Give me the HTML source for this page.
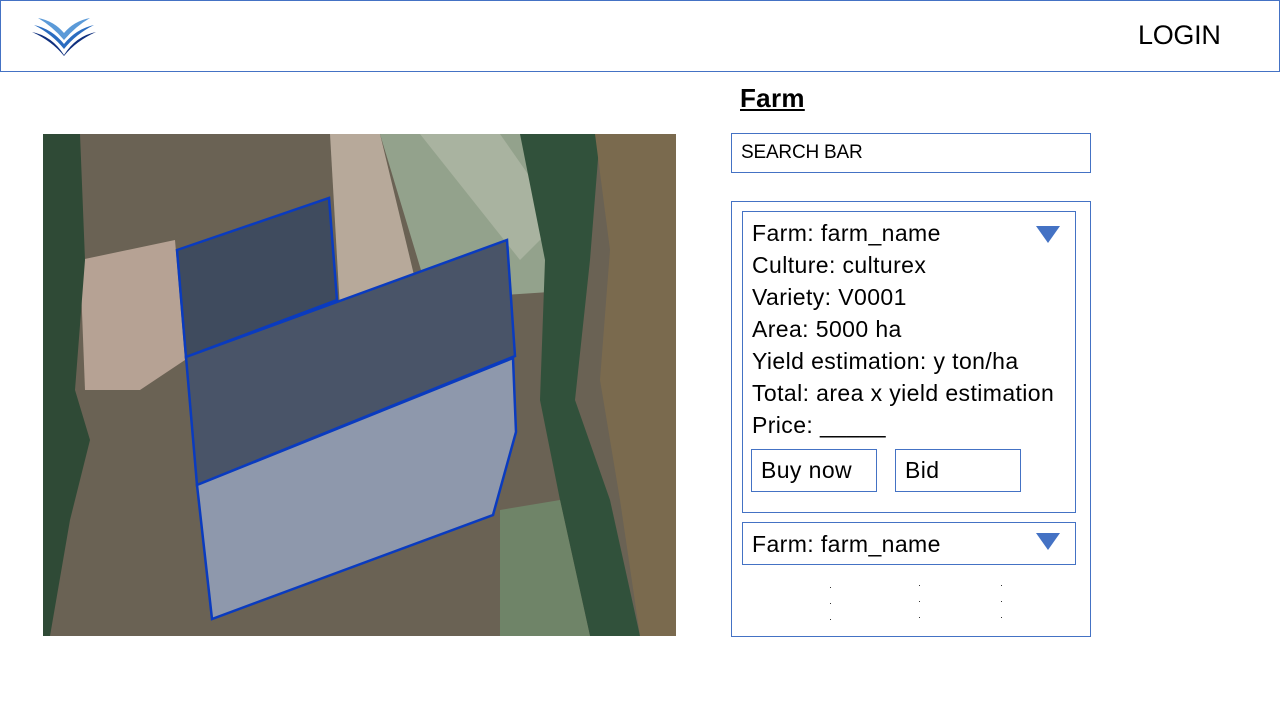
<!DOCTYPE html>
<html><head><style>
body{margin:0;width:1280px;height:720px;position:relative;background:#fff;font-family:"Liberation Sans",sans-serif;overflow:hidden}
.a{position:absolute}
.t{position:absolute;left:752px;font-size:23px;letter-spacing:0.4px;color:#000;white-space:nowrap;line-height:26px}
.box{position:absolute;border:1px solid #4472c4;box-sizing:border-box}
.tri{position:absolute;width:0;height:0;border-left:12px solid transparent;border-right:12px solid transparent;border-top:17px solid #4472c4}
.dot{position:absolute;width:1px;height:1px;background:#333}
</style></head><body>
<div class="box" style="left:0;top:0;width:1280px;height:72px"></div>
<svg class="a" style="left:30px;top:15px" width="68" height="42" viewBox="0 0 68 42">
<path d="M8 3 Q24 6 34 18 Q44 6 60 3 Q46 11 34 25 Q22 11 8 3Z" fill="#5b9ad8"/>
<path d="M4 10 Q22 14 34 29 Q46 14 64 10 Q46 19 34 34 Q22 19 4 10Z" fill="#2a6cc0"/>
<path d="M2 17 Q22 21 34 40 Q46 21 66 17 Q46 26 34 41 Q22 26 2 17Z" fill="#10307e"/>
</svg>
<div class="a" style="left:1138px;top:20px;font-size:27px;letter-spacing:-0.3px">LOGIN</div>
<div class="a" style="left:740px;top:83px;font-size:26px;font-weight:bold;text-decoration:underline;letter-spacing:0.3px">Farm</div>
<div class="box" style="left:731px;top:133px;width:360px;height:40px"></div>
<div class="a" style="left:741px;top:142px;font-size:19px;letter-spacing:-0.2px">SEARCH BAR</div>

<svg class="a" style="left:43px;top:134px" width="633" height="502" viewBox="43 134 633 502">
<rect x="43" y="134" width="633" height="502" fill="#6a6254"/>
<polygon points="330,134 380,134 420,300 340,310" fill="#b7a99a"/>
<polygon points="380,134 560,134 580,290 430,300" fill="#93a28c"/>
<polygon points="420,134 500,134 560,220 520,260" fill="#a9b3a0"/>
<polygon points="80,260 175,240 185,360 140,390 85,390" fill="#b6a294"/>
<polygon points="43,134 80,134 85,260 75,390 90,440 70,520 50,636 43,636" fill="#2f4a36"/>
<polygon points="520,134 600,134 590,260 575,400 610,500 640,636 590,636 560,500 540,400 545,260" fill="#31513b"/>
<polygon points="595,134 676,134 676,636 640,636 620,500 600,380 610,250" fill="#7a6a4e"/>
<polygon points="500,510 560,500 590,636 500,636" fill="#6f8468"/>
<polygon points="177,250 329,198 337,300 186,357" fill="#3f4b5e" stroke="#0a3bbf" stroke-width="2.5"/>
<polygon points="186,357 507,240 515,356 197,485" fill="#495468" stroke="#0a3bbf" stroke-width="2.5"/>
<polygon points="197,485 513,358 516,432 493,515 212,619" fill="#8e98ac" stroke="#0a3bbf" stroke-width="2.5"/>
</svg>

<div class="box" style="left:731px;top:201px;width:360px;height:436px"></div>
<div class="box" style="left:742px;top:211px;width:334px;height:302px"></div>
<div class="t" style="top:220px">Farm: farm_name</div>
<div class="tri" style="left:1036px;top:226px"></div>
<div class="t" style="top:252px">Culture: culturex</div>
<div class="t" style="top:284px">Variety: V0001</div>
<div class="t" style="top:316px">Area: 5000 ha</div>
<div class="t" style="top:348px">Yield estimation: y ton/ha</div>
<div class="t" style="top:380px">Total: area x yield estimation</div>
<div class="t" style="top:412px">Price: _____</div>
<div class="box" style="left:751px;top:449px;width:126px;height:43px"></div>
<div class="a" style="left:761px;top:457px;font-size:23px;letter-spacing:0.4px">Buy now</div>
<div class="box" style="left:895px;top:449px;width:126px;height:43px"></div>
<div class="a" style="left:905px;top:457px;font-size:23px;letter-spacing:0.4px">Bid</div>
<div class="box" style="left:742px;top:522px;width:334px;height:43px"></div>
<div class="t" style="top:531px">Farm: farm_name</div>
<div class="tri" style="left:1036px;top:533px"></div>
<div class="dot" style="left:830px;top:587px"></div><div class="dot" style="left:830px;top:603px"></div><div class="dot" style="left:830px;top:619px"></div>
<div class="dot" style="left:919px;top:585px"></div><div class="dot" style="left:919px;top:601px"></div><div class="dot" style="left:919px;top:617px"></div>
<div class="dot" style="left:1001px;top:585px"></div><div class="dot" style="left:1001px;top:601px"></div><div class="dot" style="left:1001px;top:617px"></div>
</body></html>
